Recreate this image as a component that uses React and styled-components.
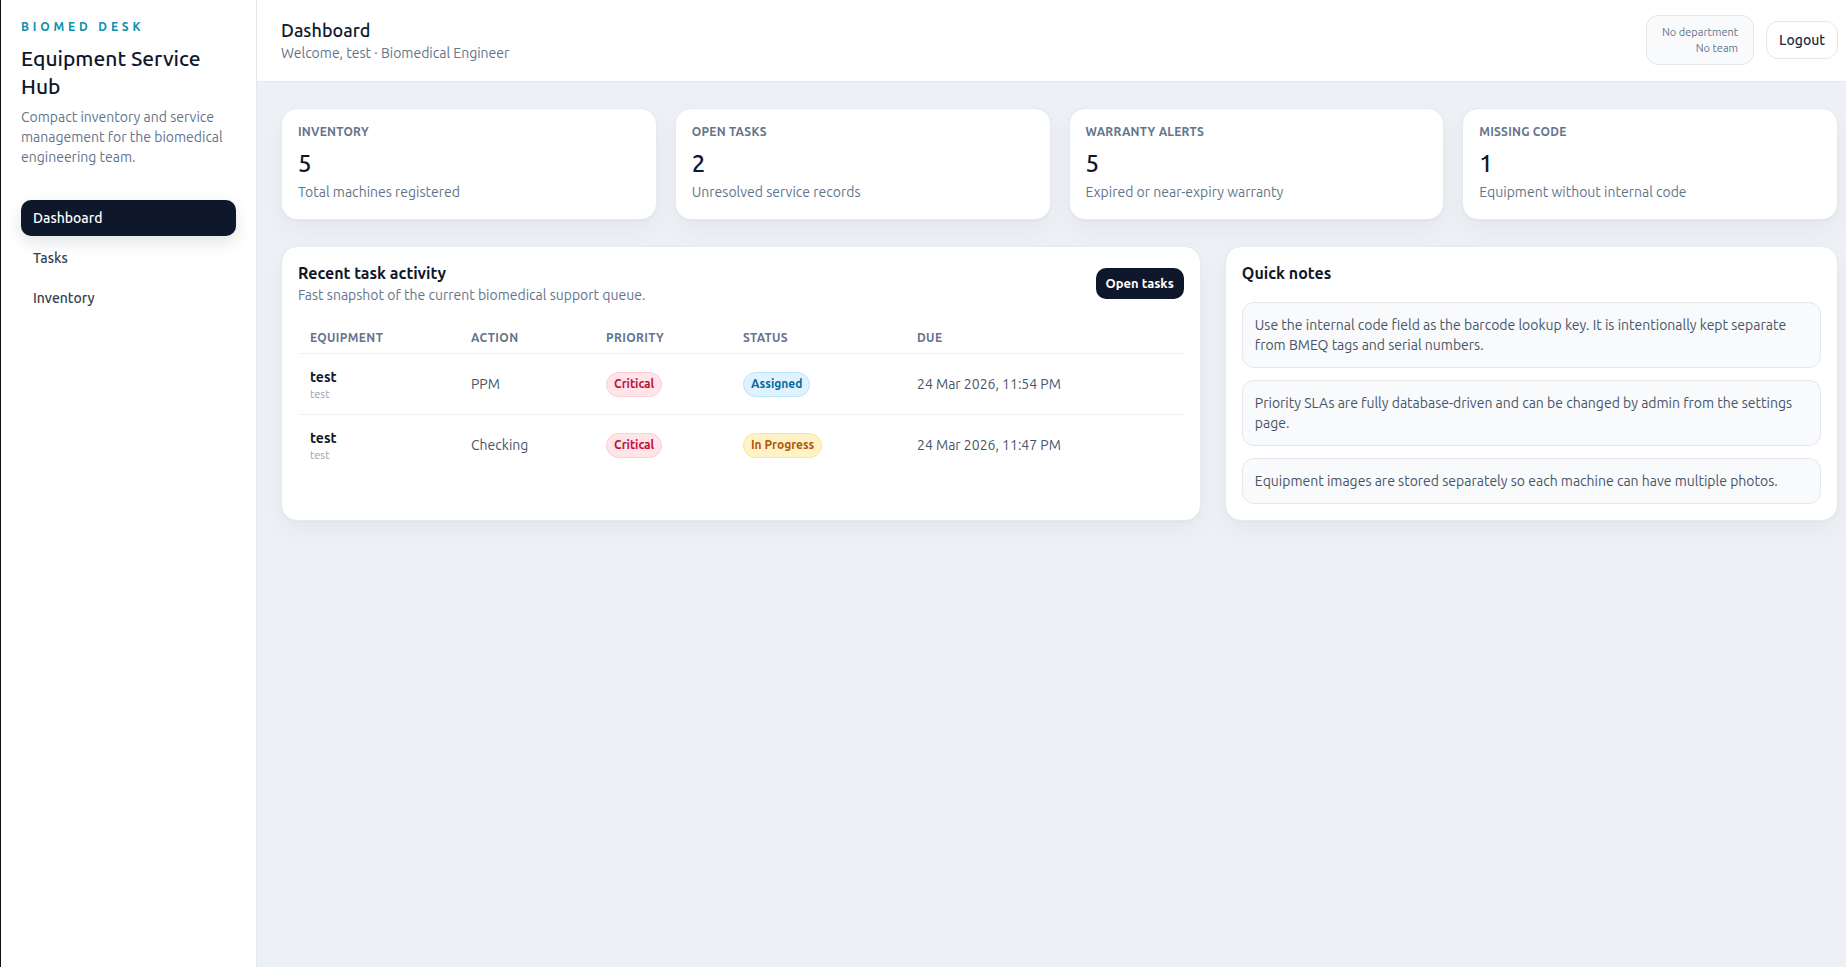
import React from 'react';
import styled, { createGlobalStyle } from 'styled-components';

const GlobalStyle = createGlobalStyle`
  * { box-sizing: border-box; }
  html, body { margin: 0; padding: 0; }
  body {
    font-family: "Ubuntu", "Lato", "Noto Sans", sans-serif;
    color: #0f172a;
    background: #edf1f5;
    border-left: 1px solid #111;
  }
`;

const Shell = styled.div`
  display: flex;
  min-height: 100vh;
`;

const Sidebar = styled.aside`
  width: 256px;
  flex-shrink: 0;
  background: #fff;
  border-right: 1px solid #e2e8f0;
  padding: 19px 20px 20px 20px;
`;

const Brand = styled.div`
  font-size: 12px;
  line-height: 16px;
  font-weight: 600;
  letter-spacing: 0.32em;
  color: #0e8fae;
`;

const AppTitle = styled.h1`
  margin: 9px 0 0;
  font-size: 21px;
  line-height: 28px;
  font-weight: 500;
  color: #0f172a;
`;

const AppBlurb = styled.p`
  margin: 7px 0 0;
  font-size: 14px;
  line-height: 20px;
  color: #64748b;
`;

const Nav = styled.nav`
  margin-top: 33px;
  display: flex;
  flex-direction: column;
  gap: 4px;
`;

const NavItem = styled.a`
  display: flex;
  align-items: center;
  height: 36px;
  padding: 0 12px;
  border-radius: 10px;
  font-size: 14px;
  font-weight: 500;
  text-decoration: none;
  cursor: pointer;
  color: ${p => (p.$active ? '#fff' : '#334155')};
  background: ${p => (p.$active ? '#0f172a' : 'transparent')};
  box-shadow: ${p => (p.$active ? '0 6px 16px rgba(15, 23, 42, 0.12)' : 'none')};
`;

const Main = styled.main`
  flex: 1;
  min-width: 0;
  display: flex;
  flex-direction: column;
`;

const Header = styled.header`
  height: 82px;
  background: #fff;
  border-bottom: 1px solid #e2e8f0;
  padding: 0 8px 2px 24px;
  display: flex;
  align-items: center;
  justify-content: space-between;
`;

const PageTitle = styled.div`
  font-size: 18px;
  line-height: 26px;
  font-weight: 500;
  color: #0f172a;
`;

const PageSub = styled.div`
  font-size: 14px;
  line-height: 20px;
  color: #64748b;
`;

const HeaderActions = styled.div`
  display: flex;
  align-items: center;
  gap: 12px;
`;

const OrgBox = styled.div`
  padding: 8px 15px;
  border: 1px solid #e2e8f0;
  background: #f8fafc;
  border-radius: 12px;
  text-align: right;
  font-size: 11px;
  line-height: 16px;
  color: #64748b;
`;

const LogoutButton = styled.button`
  height: 38px;
  padding: 0 12px;
  border: 1px solid #e2e8f0;
  background: #fff;
  border-radius: 12px;
  font-family: inherit;
  font-size: 14px;
  font-weight: 500;
  color: #1e293b;
  cursor: pointer;
`;

const Content = styled.div`
  padding: 26px 8px 24px 24px;
  display: flex;
  flex-direction: column;
  gap: 26px;
`;

const StatGrid = styled.div`
  display: grid;
  grid-template-columns: repeat(4, 1fr);
  gap: 18px;
`;

const Card = styled.section`
  background: #fff;
  border: 1px solid #e6eaf0;
  border-radius: 16px;
  box-shadow: 0 1px 2px rgba(15, 23, 42, 0.04), 0 10px 24px rgba(15, 23, 42, 0.04);
`;

const StatCard = styled(Card)`
  padding: 15px 16px 17px;
`;

const StatLabel = styled.div`
  font-size: 12px;
  line-height: 16px;
  font-weight: 600;
  text-transform: uppercase;
  letter-spacing: 0.02em;
  color: #64748b;
`;

const StatValue = styled.div`
  margin-top: 8px;
  font-size: 24px;
  line-height: 32px;
  font-weight: 500;
  color: #0f172a;
`;

const StatHint = styled.div`
  margin-top: 2px;
  font-size: 14px;
  line-height: 20px;
  color: #64748b;
`;

const PanelGrid = styled.div`
  display: grid;
  grid-template-columns: 1.5fr 1fr;
  gap: 24px;
  align-items: stretch;
`;

const Panel = styled(Card)`
  padding: 14px 16px 16px;
`;

const PanelHead = styled.div`
  display: flex;
  align-items: center;
  justify-content: space-between;
`;

const PanelTitle = styled.h2`
  margin: 0;
  font-size: 16px;
  line-height: 24px;
  font-weight: 600;
  color: #0f172a;
`;

const PanelSub = styled.div`
  font-size: 14px;
  line-height: 20px;
  color: #64748b;
`;

const DarkButton = styled.button`
  height: 31px;
  padding: 0 10px;
  border: none;
  border-radius: 10px;
  background: #0f172a;
  color: #fff;
  font-family: inherit;
  font-size: 13px;
  font-weight: 600;
  cursor: pointer;
`;

const Table = styled.table`
  width: 100%;
  margin-top: 14px;
  border-collapse: collapse;
  table-layout: fixed;
`;

const Th = styled.th`
  width: ${p => p.$w};
  padding: 11px 12px 7px;
  text-align: left;
  font-size: 12px;
  line-height: 16px;
  font-weight: 600;
  letter-spacing: 0.03em;
  text-transform: uppercase;
  color: #64748b;
  border-bottom: 1px solid #eef1f6;
`;

const Td = styled.td`
  padding: 13px 12px;
  font-size: 14px;
  line-height: 20px;
  color: #475569;
  vertical-align: middle;
  border-bottom: ${p => (p.$last ? 'none' : '1px solid #eef1f6')};
`;

const EquipName = styled.div`
  font-size: 14px;
  line-height: 20px;
  font-weight: 600;
  color: #0f172a;
`;

const EquipSub = styled.div`
  font-size: 11px;
  line-height: 14px;
  color: #94a3b8;
`;

const badgeTones = {
  critical: { bg: '#ffe4e8', border: '#fecdd6', fg: '#be123c' },
  assigned: { bg: '#e0f2fe', border: '#bae6fd', fg: '#0369a1' },
  progress: { bg: '#fef3c7', border: '#fde68a', fg: '#b45309' },
};

const Badge = styled.span`
  display: inline-flex;
  align-items: center;
  height: 25px;
  padding: 0 7px;
  border-radius: 999px;
  font-size: 12px;
  font-weight: 600;
  background: ${p => badgeTones[p.$tone].bg};
  border: 1px solid ${p => badgeTones[p.$tone].border};
  color: ${p => badgeTones[p.$tone].fg};
`;

const NoteList = styled.div`
  margin-top: 17px;
  display: flex;
  flex-direction: column;
  gap: 12px;
`;

const Note = styled.div`
  padding: 12px 12px;
  border: 1px solid #e2e8f0;
  background: #f8fafc;
  border-radius: 12px;
  font-size: 14px;
  line-height: 20px;
  color: #475569;
`;

const stats = [
  { label: 'Inventory', value: 5, hint: 'Total machines registered' },
  { label: 'Open tasks', value: 2, hint: 'Unresolved service records' },
  { label: 'Warranty alerts', value: 5, hint: 'Expired or near-expiry warranty' },
  { label: 'Missing code', value: 1, hint: 'Equipment without internal code' },
];

const tasks = [
  { name: 'test', sub: 'test', action: 'PPM', priority: 'Critical', status: 'Assigned', tone: 'assigned', due: '24 Mar 2026, 11:54 PM' },
  { name: 'test', sub: 'test', action: 'Checking', priority: 'Critical', status: 'In Progress', tone: 'progress', due: '24 Mar 2026, 11:47 PM' },
];

const notes = [
  'Use the internal code field as the barcode lookup key. It is intentionally kept separate from BMEQ tags and serial numbers.',
  'Priority SLAs are fully database-driven and can be changed by admin from the settings page.',
  'Equipment images are stored separately so each machine can have multiple photos.',
];

export default function App() {
  return (
    <>
      <GlobalStyle />
      <Shell>
        <Sidebar>
          <Brand>BIOMED DESK</Brand>
          <AppTitle>Equipment Service Hub</AppTitle>
          <AppBlurb>Compact inventory and service management for the biomedical engineering team.</AppBlurb>
          <Nav>
            <NavItem $active>Dashboard</NavItem>
            <NavItem>Tasks</NavItem>
            <NavItem>Inventory</NavItem>
          </Nav>
        </Sidebar>

        <Main>
          <Header>
            <div>
              <PageTitle>Dashboard</PageTitle>
              <PageSub>Welcome, test · Biomedical Engineer</PageSub>
            </div>
            <HeaderActions>
              <OrgBox>
                <div>No department</div>
                <div>No team</div>
              </OrgBox>
              <LogoutButton>Logout</LogoutButton>
            </HeaderActions>
          </Header>

          <Content>
            <StatGrid>
              {stats.map(s => (
                <StatCard key={s.label}>
                  <StatLabel>{s.label}</StatLabel>
                  <StatValue>{s.value}</StatValue>
                  <StatHint>{s.hint}</StatHint>
                </StatCard>
              ))}
            </StatGrid>

            <PanelGrid>
              <Panel>
                <PanelHead>
                  <div>
                    <PanelTitle>Recent task activity</PanelTitle>
                    <PanelSub>Fast snapshot of the current biomedical support queue.</PanelSub>
                  </div>
                  <DarkButton>Open tasks</DarkButton>
                </PanelHead>
                <Table>
                  <thead>
                    <tr>
                      <Th $w="161px">Equipment</Th>
                      <Th $w="135px">Action</Th>
                      <Th $w="137px">Priority</Th>
                      <Th $w="174px">Status</Th>
                      <Th>Due</Th>
                    </tr>
                  </thead>
                  <tbody>
                    {tasks.map((t, i) => {
                      const last = i === tasks.length - 1;
                      return (
                        <tr key={i}>
                          <Td $last={last}>
                            <EquipName>{t.name}</EquipName>
                            <EquipSub>{t.sub}</EquipSub>
                          </Td>
                          <Td $last={last}>{t.action}</Td>
                          <Td $last={last}><Badge $tone="critical">{t.priority}</Badge></Td>
                          <Td $last={last}><Badge $tone={t.tone}>{t.status}</Badge></Td>
                          <Td $last={last}>{t.due}</Td>
                        </tr>
                      );
                    })}
                  </tbody>
                </Table>
              </Panel>

              <Panel>
                <PanelTitle>Quick notes</PanelTitle>
                <NoteList>
                  {notes.map((n, i) => (
                    <Note key={i}>{n}</Note>
                  ))}
                </NoteList>
              </Panel>
            </PanelGrid>
          </Content>
        </Main>
      </Shell>
    </>
  );
}
